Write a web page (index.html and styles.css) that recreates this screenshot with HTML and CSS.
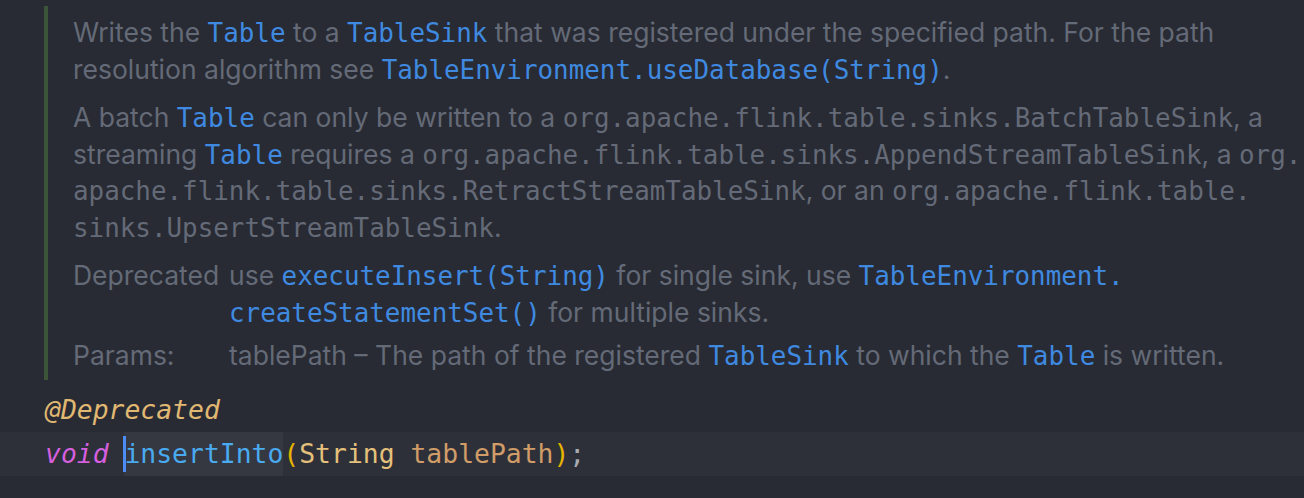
FILE: index.html
```html
<!DOCTYPE html>
<html>
<head>
<meta charset="utf-8">
<link rel="stylesheet" href="styles.css">
</head>
<body>
<div class="page">
  <div class="doc">
    <p class="para">Writes the <span class="link">Table</span> to a <span class="link">TableSink</span> that was registered under the specified path. For the path<br>resolution algorithm see <span class="link">TableEnvironment.useDatabase(String)</span>.</p>
    <p class="para">A batch <span class="link">Table</span> can only be written to a <span class="code">org.apache.flink.table.sinks.BatchTableSink</span>, a<br>streaming <span class="link">Table</span> requires a <span class="code">org.apache.flink.table.sinks.AppendStreamTableSink</span>, a <span class="code">org.</span><br><span class="code">apache.flink.table.sinks.RetractStreamTableSink</span>, or an <span class="code">org.apache.flink.table.</span><br><span class="code">sinks.UpsertStreamTableSink</span>.</p>
    <div class="tags">
      <div class="tag-label">Deprecated</div>
      <div class="tag-value">use <span class="link">executeInsert(String)</span> for single sink, use <span class="link">TableEnvironment.</span><br><span class="link">createStatementSet()</span> for multiple sinks.</div>
      <div class="tag-label params">Params:</div>
      <div class="tag-value params">tablePath – The path of the registered <span class="link">TableSink</span> to which the <span class="link">Table</span> is written.</div>
    </div>
  </div>
  <div class="editor">
    <div class="line"><span class="annot">@Deprecated</span></div>
    <div class="line current"><span class="kw">void</span> <span class="ident">insertInto</span><span class="paren">(</span><span class="type">String</span> <span class="param">tablePath</span><span class="paren">)</span><span class="punct">;</span></div>
  </div>
</div>
</body>
</html>
```

FILE: styles.css
```css
html, body {
  margin: 0;
  padding: 0;
  background: #282b33;
}

.page {
  width: 1304px;
  height: 498px;
  padding-top: 6px;
  box-sizing: border-box;
}

.doc {
  margin-left: 44px;
  border-left: 4px solid #3c5437;
  padding: 8px 0 6px 25px;
  height: 374px;
  box-sizing: border-box;
  font-family: Inter, "Noto Sans", sans-serif;
  font-size: 26.5px;
  line-height: 36.5px;
  color: #646a77;
  white-space: nowrap;
}

.para {
  margin: 0 0 12px 0;
}

.link {
  font-family: "DejaVu Sans Mono", monospace;
  font-size: 25.9px;
  line-height: 1;
  color: #3f8ae0;
}

.code {
  font-family: "DejaVu Sans Mono", monospace;
  font-size: 25.9px;
  line-height: 1;
  color: #646a77;
}

.tags {
  display: grid;
  grid-template-columns: 156px 1fr;
  row-gap: 7px;
}

.tag-label {
  color: #646a77;
}

.editor {
  margin-top: 8px;
  font-family: "DejaVu Sans Mono", monospace;
  font-size: 26.4px;
}

.line {
  height: 44px;
  line-height: 44px;
  padding-left: 45px;
  white-space: pre;
}

.line.current {
  background: #2d3038;
}

.annot {
  color: #e0b872;
  font-style: italic;
}

.kw {
  color: #d55fde;
  font-style: italic;
}

.ident {
  position: relative;
  display: inline-block;
  color: #4aaaef;
  background: #353841;
}

.ident::before {
  content: "";
  position: absolute;
  left: -1px;
  top: 4px;
  width: 3px;
  height: 36px;
  background: #4c8cf5;
}

.paren {
  color: #e5b400;
}

.type {
  color: #e5c07b;
}

.param {
  color: #d09c68;
}

.punct {
  color: #a7abb2;
}
```
